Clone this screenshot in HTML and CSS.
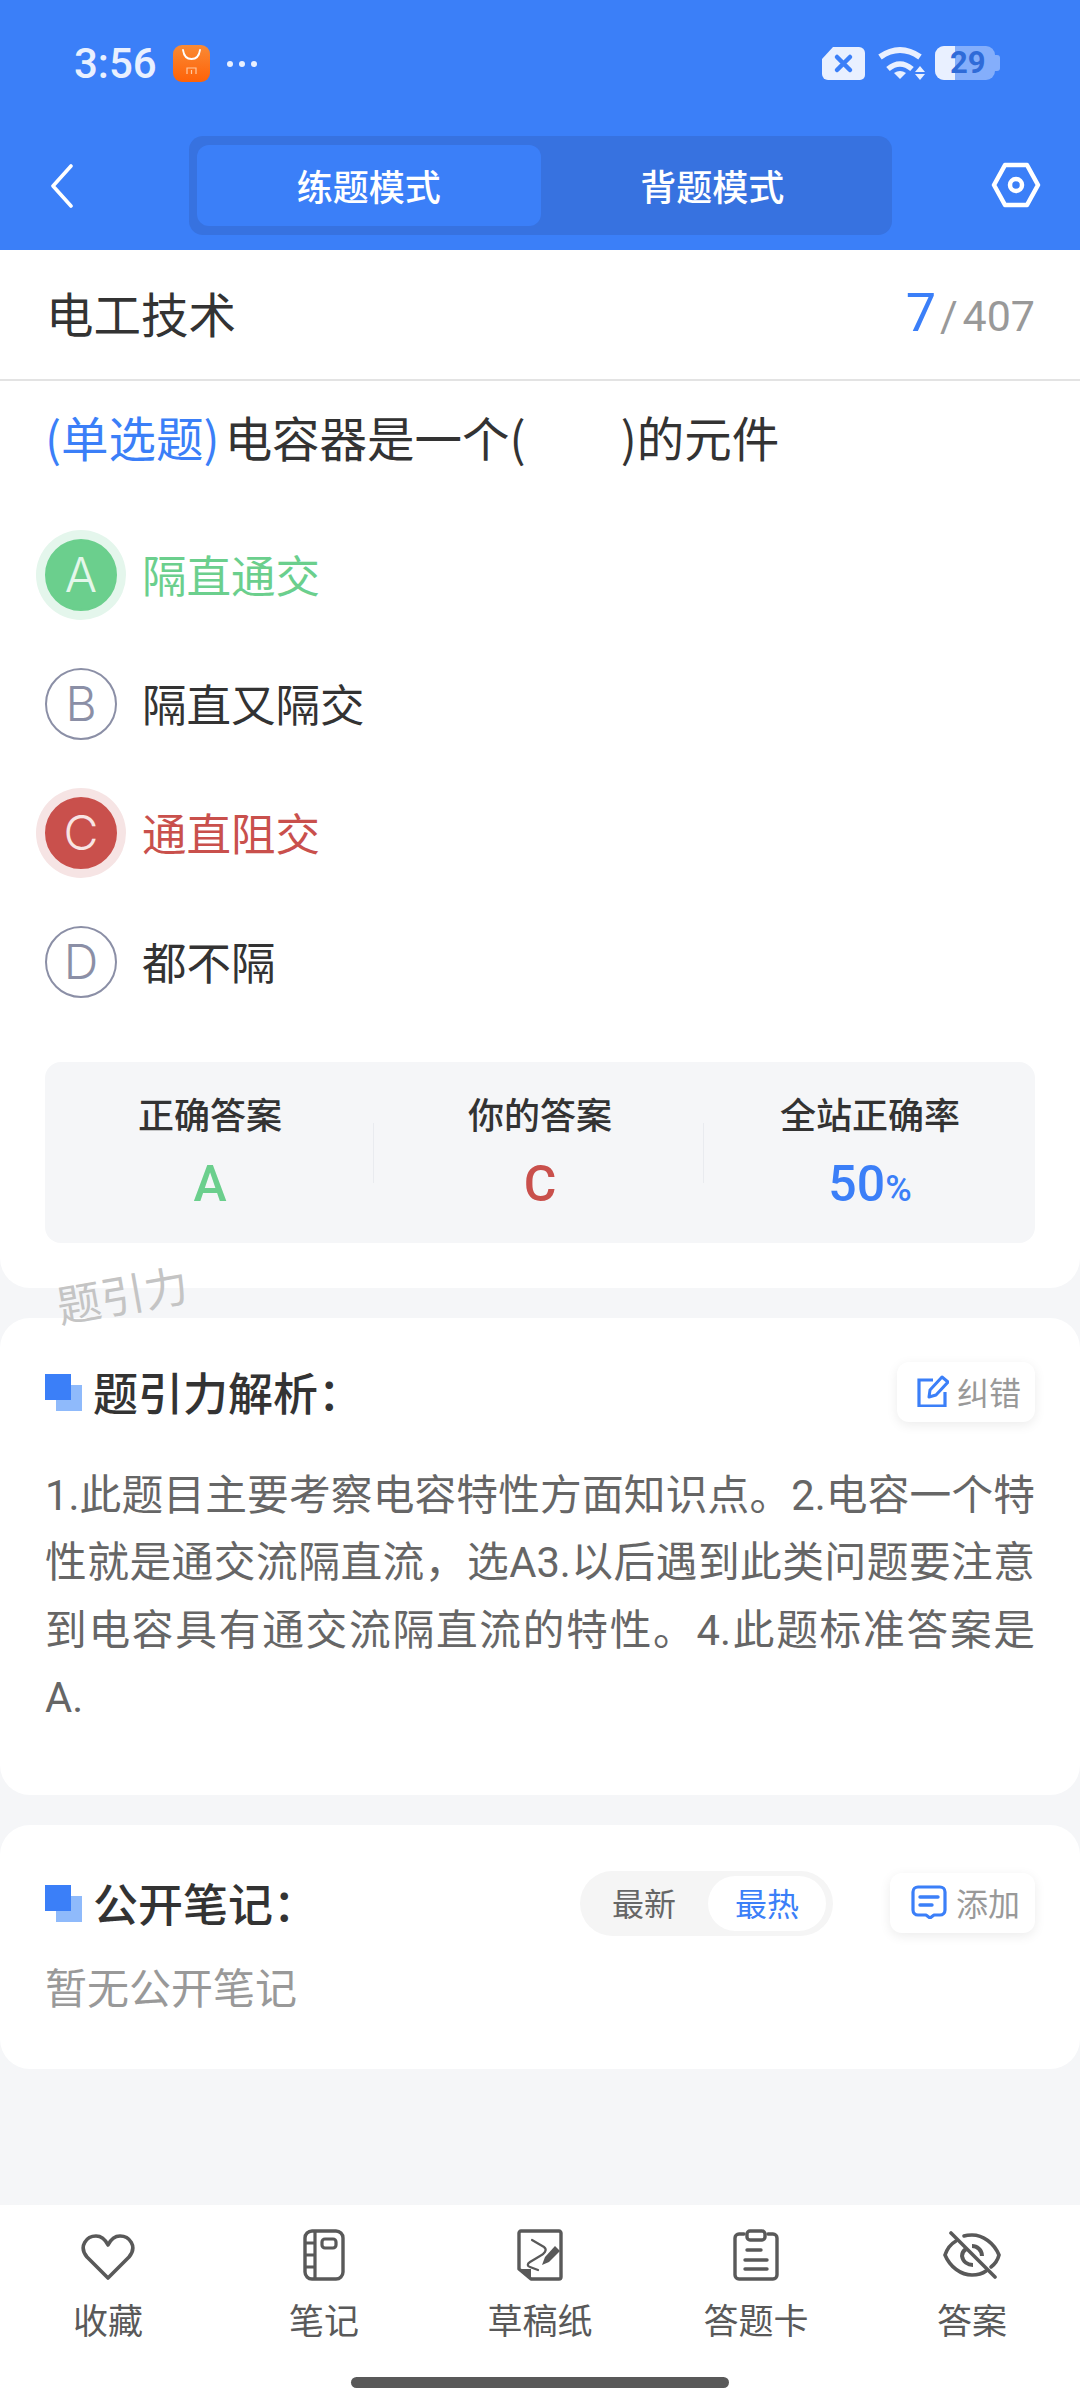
FILE: index.html
```html
<!DOCTYPE html>
<html lang="zh">
<head>
<meta charset="utf-8">
<title>电工技术</title>
<link rel="stylesheet" href="styles.css">
</head>
<body>
<div class="page">
  <header class="top">
    <div class="status">
      <div class="status-left">
        <span class="time">3:56</span>
        <span class="appicon">
          <svg width="37" height="37" viewBox="0 0 37 37"><path d="M10 5c1 7 5 9 8.500 9S26 12 27 5" fill="none" stroke="#fff" stroke-width="1.800" stroke-linecap="round"/><path d="M14 29v-6h9v6M18.500 25v4" fill="none" stroke="#ffc9a0" stroke-width="1.200"/></svg>
        </span>
        <span class="dots"><i></i><i></i><i></i></span>
      </div>
      <div class="status-right">
        <svg width="43" height="35" viewBox="0 0 43 35"><path d="M11 1h26a6 6 0 0 1 6 6v22a5 5 0 0 1-5 5H6a6 6 0 0 1-6-6V13z" fill="#e9f0ff"/><path d="M15 11l13 13M28 11L15 24" stroke="#3b7ff8" stroke-width="4.500" stroke-linecap="round"/></svg>
        <svg width="48" height="35" viewBox="0 0 48 35"><path d="M3 11Q23-3 43 11" fill="none" stroke="#e9f0ff" stroke-width="6"/><path d="M11 23Q23 13 35 23" fill="none" stroke="#e9f0ff" stroke-width="5.500"/><path d="M17 27Q23 23 29 27L23 33z" fill="#e9f0ff"/><path d="M43 20l5 6H38zM43 34l5-6H38z" fill="#e9f0ff"/></svg>
        <span class="battery"><span class="battery-fill"></span><span class="battery-cap"></span><span class="battery-num">29</span></span>
      </div>
    </div>
    <nav class="nav">
      <svg class="back" width="24" height="44" viewBox="0 0 24 44"><path d="M21 2L3 22l18 20" fill="none" stroke="#fff" stroke-width="3.600" stroke-linecap="round" stroke-linejoin="round"/></svg>
      <div class="tabs">
        <span class="tab tab-on">练题模式</span>
        <span class="tab">背题模式</span>
      </div>
      <svg class="hex" width="50" height="46" viewBox="0 0 50 46"><path d="M14 3h22l11 20-11 20H14L3 23z" fill="none" stroke="#fff" stroke-width="4.500" stroke-linejoin="round"/><circle cx="25" cy="23" r="6" fill="none" stroke="#fff" stroke-width="4.500"/></svg>
    </nav>
  </header>

  <main class="main">
    <section class="card card-q">
      <div class="subject">
        <span class="subject-name">电工技术</span>
        <span class="count"><b>7</b><span class="count-rest">/ 407</span></span>
      </div>
      <p class="question"><span class="qtype">(单选题)</span>电容器是一个(　　)的元件</p>
      <ul class="options">
        <li class="option opt-right"><span class="letter">A</span><span class="opt-text">隔直通交</span></li>
        <li class="option"><span class="letter">B</span><span class="opt-text">隔直又隔交</span></li>
        <li class="option opt-wrong"><span class="letter">C</span><span class="opt-text">通直阻交</span></li>
        <li class="option"><span class="letter">D</span><span class="opt-text">都不隔</span></li>
      </ul>
      <div class="stats">
        <div class="stat"><span class="stat-label">正确答案</span><span class="stat-val green">A</span></div>
        <div class="stat"><span class="stat-label">你的答案</span><span class="stat-val red">C</span></div>
        <div class="stat"><span class="stat-label">全站正确率</span><span class="stat-val blue">50<small>%</small></span></div>
      </div>
    </section>
    <span class="watermark">题引力</span>

    <section class="card card-exp">
      <div class="sec-head">
        <h2 class="sec-title"><span class="squares"></span>题引力解析：</h2>
        <span class="chip">
          <svg width="33" height="32" viewBox="0 0 33 32"><path d="M17 5H3v26h26V17" fill="none" stroke="#3b7ff8" stroke-width="3.200"/><path d="M13 22l1-7L26 2l6 5-12 13z" fill="none" stroke="#3b7ff8" stroke-width="3" stroke-linejoin="round"/></svg>
          纠错
        </span>
      </div>
      <div class="exp">
        <span class="exp-line">1.此题目主要考察电容特性方面知识点。2.电容一个特</span>
        <span class="exp-line">性就是通交流隔直流，选A3.以后遇到此类问题要注意</span>
        <span class="exp-line">到电容具有通交流隔直流的特性。4.此题标准答案是</span>
        <span class="exp-end">A.</span>
      </div>
    </section>

    <section class="card card-note">
      <div class="sec-head">
        <h2 class="sec-title"><span class="squares"></span>公开笔记：</h2>
        <div class="sec-tools">
          <div class="sort"><span class="sort-item">最新</span><span class="sort-item sort-on">最热</span></div>
          <span class="chip">
            <svg width="36" height="34" viewBox="0 0 36 34"><path d="M7 2h22a5 5 0 0 1 5 5v18a5 5 0 0 1-5 5h-6l-4 3-4-3H7a5 5 0 0 1-5-5V7a5 5 0 0 1 5-5z" fill="none" stroke="#3b7ff8" stroke-width="3.200" stroke-linejoin="round"/><path d="M9 12h18M9 20h12" stroke="#3b7ff8" stroke-width="3.400" stroke-linecap="round"/></svg>
            添加
          </span>
        </div>
      </div>
      <p class="empty">暂无公开笔记</p>
    </section>
  </main>

  <footer class="bar">
    <div class="bar-items">
      <div class="bar-item">
        <span class="bar-ico bar-ico-heart"><svg width="54" height="46" viewBox="0 0 54 46"><path d="M27 44L6 23C-3 12 6 2 15 2c5 0 9 3 12 9 3-6 7-9 12-9 9 0 18 10 9 21z" fill="none" stroke="#595959" stroke-width="3.600" stroke-linejoin="round"/></svg></span>
        <span>收藏</span>
      </div>
      <div class="bar-item">
        <span class="bar-ico"><svg width="42" height="52" viewBox="0 0 42 52"><rect x="2" y="2" width="38" height="48" rx="7" fill="none" stroke="#595959" stroke-width="3.400"/><path d="M12 2v48M2 14h10M2 26h10M2 38h10" stroke="#595959" stroke-width="3.200"/><rect x="19" y="10" width="14" height="9" rx="3" fill="none" stroke="#595959" stroke-width="3.200"/></svg></span>
        <span>笔记</span>
      </div>
      <div class="bar-item">
        <span class="bar-ico"><svg width="46" height="52" viewBox="0 0 46 52"><path d="M14 50H42a2 2 0 0 0 2-2V4a2 2 0 0 0-2-2H4a2 2 0 0 0-2 2v36z" fill="none" stroke="#595959" stroke-width="3.400" stroke-linejoin="round"/><path d="M2 40h12v10z" fill="#595959"/><path d="M15 11l12 7c4 3 0 7-4 9l-10 6c-3 2-3 4 0 5l8 3" fill="none" stroke="#595959" stroke-width="2.200" stroke-linecap="round"/><path d="M25 36l3-8 10-11 5 5-11 11z" fill="#595959"/></svg></span>
        <span>草稿纸</span>
      </div>
      <div class="bar-item">
        <span class="bar-ico"><svg width="46" height="52" viewBox="0 0 46 52"><path d="M11 5H6a4 4 0 0 0-4 4v37a4 4 0 0 0 4 4h34a4 4 0 0 0 4-4V9a4 4 0 0 0-4-4h-5" fill="none" stroke="#595959" stroke-width="3.400" stroke-linecap="round"/><rect x="14" y="2" width="18" height="9" rx="3" fill="none" stroke="#595959" stroke-width="3.400"/><path d="M14 21h14M12 31h22M12 40h22" stroke="#595959" stroke-width="3.400" stroke-linecap="round"/></svg></span>
        <span>答题卡</span>
      </div>
      <div class="bar-item">
        <span class="bar-ico"><svg width="58" height="48" viewBox="0 0 58 48"><path d="M13 10C6 14 3 21 2 24c5 12 16 20 27 20 5 0 10-1 14-4M21 5c3-1 5-1 8-1 11 0 22 8 27 20-1 4-4 9-8 12" fill="none" stroke="#595959" stroke-width="3.600" stroke-linecap="round"/><path d="M23 18c-3 2-4 5-4 7 1 6 6 9 11 9" fill="none" stroke="#595959" stroke-width="4"/><path d="M29 15c5 0 10 4 10 10" fill="none" stroke="#595959" stroke-width="4"/><path d="M8 2l44 44" stroke="#595959" stroke-width="3.600" stroke-linecap="round"/></svg></span>
        <span>答案</span>
      </div>
    </div>
    <div class="home"></div>
  </footer>
</div>
</body>
</html>
```

FILE: styles.css
```css
* { box-sizing: border-box; }
html, body { margin: 0; padding: 0; }
body { font-family: "Noto Sans CJK SC", "Noto Sans", sans-serif; color: #333; }
.page { width: 1080px; height: 2400px; display: flex; flex-direction: column; background: #f5f6f8; overflow: hidden; }

.top { height: 250px; background: #3b7ff8; display: flex; flex-direction: column; flex: none; }
.status { height: 136px; padding: 45px 80px 0 74px; display: flex; justify-content: space-between; align-items: flex-start; }
.status-left { display: flex; align-items: center; height: 37px; }
.time { font: 500 42px/37px Roboto, sans-serif; color: #e9f0ff; width: 99px; }
.appicon { width: 37px; height: 37px; border-radius: 9px; background: linear-gradient(#f98a35, #ff6207); display: block; }
.appicon svg { display: block; }
.dots { display: flex; gap: 6px; margin-left: 17px; }
.dots i { width: 6px; height: 6px; border-radius: 50%; background: #e9f0ff; }
.status-right { display: flex; align-items: flex-start; gap: 12px; }
.status-right svg { display: block; margin-top: 1px; }
.battery { position: relative; width: 60px; height: 34px; margin: 1px 5px 0 -2px; border-radius: 9px; background: rgba(233,240,255,.42); display: block; }
.battery-fill { position: absolute; left: 0; top: 0; bottom: 0; width: 20px; background: #e9f0ff; border-radius: 9px 0 0 9px; }
.battery-cap { position: absolute; right: -5px; top: 9px; width: 5px; height: 16px; background: rgba(233,240,255,.42); border-radius: 0 3px 3px 0; }
.battery-num { position: absolute; left: 15px; top: 0; font: 700 31px/34px Roboto, sans-serif; color: #2f6bd8; }

.nav { height: 99px; display: flex; align-items: center; padding: 0 40px 0 50px; }
.back { flex: none; }
.tabs { flex: none; width: 703px; height: 99px; margin-left: 115px; margin-right: 98px; padding: 9px 8px; background: #3772e0; border-radius: 14px; display: flex; }
.tab { flex: 1; display: flex; align-items: center; justify-content: center; font-size: 36px; font-weight: 500; color: #fff; border-radius: 12px; padding-bottom: 2px; }
.tab-on { background: #3b7ff8; }
.hex { flex: none; margin-left: 1px; margin-top: -1px; }

.main { flex: 1; position: relative; display: flex; flex-direction: column; gap: 30px; }
.card { background: #fff; border-radius: 30px; }
.card-q { height: 1038px; border-radius: 0 0 30px 30px; padding: 0 45px; }
.subject { height: 131px; margin: 0 -45px; padding: 0 45px 5px 46px; border-bottom: 2px solid #e3e3e3; display: flex; align-items: center; justify-content: space-between; }
.subject-name { font-size: 47.500px; color: #333; }
.count { font-family: Roboto, sans-serif; display: flex; align-items: baseline; }
.count b { font-weight: 400; font-size: 54px; color: #3b7ff8; margin-right: 4px; }
.count-rest { font-size: 43px; color: #999; white-space: pre; word-spacing: -6px; }
.question { margin: 24px 0 0; font-size: 47.500px; line-height: 64px; color: #333; white-space: pre; }
.qtype { color: #3b7ff8; margin-right: 5px; }
.options { list-style: none; margin: 70px 0 0; padding: 0; display: flex; flex-direction: column; gap: 57px; }
.option { display: flex; align-items: center; height: 72px; gap: 25px; font-size: 44.500px; color: #333; }
.opt-text { padding-bottom: 3px; }
.letter { width: 72px; height: 72px; border-radius: 50%; border: 2px solid #8b8fa6; color: #8b8fa6; font: 300 48px/1 Inter, sans-serif; display: flex; align-items: center; justify-content: center; }
.opt-right { color: #6bcf8d; }
.opt-right .letter { background: #6bcf8d; border-color: #6bcf8d; color: #e4f7ea; box-shadow: 0 0 0 9px #e4f6ec; }
.opt-wrong { color: #c9504c; }
.opt-wrong .letter { background: #c9504c; border-color: #c9504c; color: #f8e4e4; box-shadow: 0 0 0 9px #f6e4e4; }
.stats { margin-top: 64px; height: 181px; background: #f5f6f8; border-radius: 16px; display: grid; grid-template-columns: 1fr 1fr 1fr; }
.stat { position: relative; display: flex; flex-direction: column; align-items: center; padding-top: 27px; }
.stat + .stat::before { content: ""; position: absolute; left: -2px; top: 61px; height: 60px; width: 1px; background: #e9ebef; }
.stat-label { font-size: 36px; font-weight: 500; line-height: 48px; color: #333; }
.stat-val { font: 500 50px/60px Roboto, sans-serif; margin-top: 17px; }
.stat-val small { font-size: 36px; }
.green { color: #6bcf8d; }
.red { color: #c9504c; }
.blue { color: #3b7ff8; }

.watermark { position: absolute; left: 56px; top: 1013px; font-size: 44px; line-height: 60px; color: #c4c4c4; transform: rotate(-10deg); }

.card-exp { height: 477px; padding: 44px 45px 0; }
.card-note { height: 244px; padding: 48px 45px 0; }
.sec-head { display: flex; justify-content: space-between; align-items: center; height: 60px; }
.sec-title { margin: 0; font-size: 45px; font-weight: 500; color: #333; display: flex; align-items: center; line-height: 60px; }
.squares { position: relative; display: block; width: 37px; height: 37px; margin-right: 11px; }
.squares::before { content: ""; position: absolute; right: 0; bottom: 0; width: 26px; height: 26px; background: #8fbafb; }
.squares::after { content: ""; position: absolute; left: 0; top: 0; width: 26px; height: 26px; background: #3b7ff8; }
.chip { width: 138px; height: 60px; padding: 0 0 3px 19px; border-radius: 12px; background: #fff; box-shadow: 0 3px 12px rgba(0,0,0,.08); display: flex; align-items: center; gap: 8px; font-size: 32px; color: #999; }
.sec-tools .chip { width: 145px; padding-left: 21px; gap: 9px; }
.chip svg { flex: none; }
.exp { margin: 40px 0 0; font-family: Roboto, "Noto Sans CJK SC", sans-serif; font-size: 41.700px; line-height: 67.400px; color: #666; }
.exp-line { display: block; white-space: nowrap; text-align: justify; text-align-last: justify; text-justify: inter-character; }
.exp-end { display: block; }
.sec-tools { display: flex; align-items: center; gap: 57px; }
.sort { display: flex; width: 253px; height: 65px; background: #f5f5f5; border-radius: 33px; padding: 5px 7px 5px 0; justify-content: space-between; font-size: 32px; }
.sort-item { width: 119px; display: flex; align-items: center; justify-content: center; color: #666; padding-bottom: 3px; }
.sort-item:first-child { width: 129px; }
.sort-on { background: #fff; color: #3b7ff8; border-radius: 28px; }
.empty { margin: 23px 0 0; font-size: 42px; line-height: 60px; color: #999; }

.bar { flex: none; height: 195px; background: #fff; display: flex; flex-direction: column; align-items: center; }
.bar-items { width: 1080px; display: grid; grid-template-columns: repeat(5, 1fr); padding-top: 24px; }
.bar-item { display: flex; flex-direction: column; align-items: center; font-size: 35px; line-height: 46px; color: #595959; }
.bar-ico { height: 52px; display: flex; align-items: center; justify-content: center; margin-bottom: 15px; }
.bar-ico-heart { padding-top: 4px; }
.home { width: 378px; height: 11px; border-radius: 6px; background: #595959; margin-top: 35px; }
```
